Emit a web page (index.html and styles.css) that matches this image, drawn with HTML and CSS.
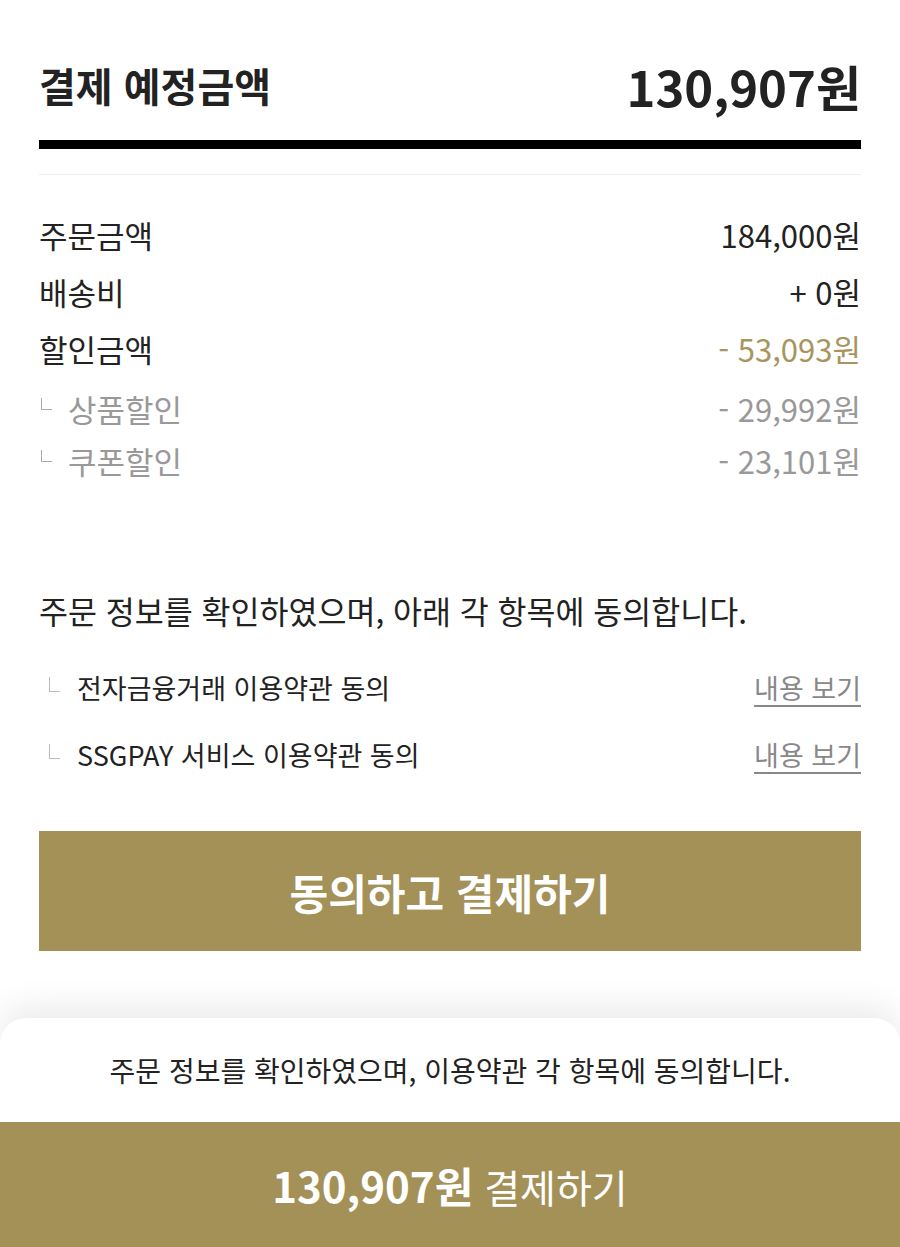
FILE: index.html
```html
<!DOCTYPE html>
<html lang="ko">
<head>
    <meta charset="UTF-8">
    <title>결제 예정금액</title>
    <meta name="viewport" content="width=device-width, initial-scale=1.0"/>
    <link rel="stylesheet" href="styles.css">
</head>

<body>
    <div class="page">
        <div class="total-head">
            <h2>결제 예정금액</h2>
            <div class="total-amount">130,907원</div>
        </div>
        <div class="thick-line"></div>
        <div class="thin-line"></div>

        <div class="price-list">
            <div class="price-row">
                <span>주문금액</span>
                <span>184,000원</span>
            </div>
            <div class="price-row">
                <span>배송비</span>
                <span>+ 0원</span>
            </div>
            <div class="price-row">
                <span>할인금액</span>
                <span class="gold">- 53,093원</span>
            </div>
            <div class="price-row sub first-sub">
                <span><i class="corner"></i>상품할인</span>
                <span>- 29,992원</span>
            </div>
            <div class="price-row sub">
                <span><i class="corner"></i>쿠폰할인</span>
                <span>- 23,101원</span>
            </div>
        </div>

        <p class="agree-title">주문 정보를 확인하였으며, 아래 각 항목에 동의합니다.</p>

        <div class="agree-list">
            <div class="agree-item">
                <span><i class="corner"></i>전자금융거래 이용약관 동의</span>
                <a href="#">내용 보기</a>
            </div>
            <div class="agree-item">
                <span><i class="corner"></i>SSGPAY 서비스 이용약관 동의</span>
                <a href="#">내용 보기</a>
            </div>
        </div>

        <button class="agree-btn">동의하고 결제하기</button>
    </div>

    <div class="bottom-sheet">
        <p class="sheet-note">주문 정보를 확인하였으며, 이용약관 각 항목에 동의합니다.</p>
        <button class="pay-bar"><b>130,907원</b> 결제하기</button>
    </div>
</body>
</html>
```

FILE: styles.css
```css
body {
    margin: 0;
    background: #fff;
    font-family: "Noto Sans CJK KR", "Noto Sans", sans-serif;
    color: #222;
}

.page {
    padding: 60px 39px 0;
}

.total-head {
    display: flex;
    justify-content: space-between;
    align-items: center;
    height: 50px;
}

.total-head h2 {
    margin: 0;
    font-size: 40px;
    font-weight: 700;
}

.total-amount {
    font-size: 49px;
    font-weight: 700;
}

.thick-line {
    height: 9px;
    background: #000;
    margin-top: 30px;
}

.thin-line {
    height: 1px;
    background: #eee;
    margin-top: 25px;
}

.price-list {
    margin-top: 31px;
}

.price-row {
    display: flex;
    justify-content: space-between;
    align-items: center;
    height: 57px;
    font-size: 31px;
}

.price-row.sub {
    height: 52px;
    color: #999;
}

.price-row.first-sub {
    margin-top: 5px;
}

.gold {
    color: #a8955e;
}

.corner {
    display: inline-block;
    width: 10px;
    height: 11px;
    border-left: 1.5px solid #aaa;
    border-bottom: 1.5px solid #aaa;
    vertical-align: 12px;
    margin: 0 16px 0 2px;
}

.agree-title {
    margin: 104px 0 0;
    line-height: 40px;
    font-size: 31.5px;
}

.agree-list {
    margin-top: 24px;
}

.agree-item {
    display: flex;
    justify-content: space-between;
    align-items: center;
    height: 67px;
    font-size: 27px;
}

.agree-item .corner {
    width: 10px;
    height: 14px;
    border-color: #bbb;
    border-width: 1px;
    margin: 0 17px 0 10px;
    vertical-align: 7px;
}

.agree-item a {
    color: #888;
    text-decoration: underline;
    text-decoration-thickness: 2px;
    text-underline-offset: 6px;
}

.agree-btn {
    display: block;
    width: 100%;
    height: 120px;
    margin-top: 43px;
    border: none;
    background: #a39158;
    color: #fff;
    font-family: inherit;
    font-size: 42px;
    font-weight: 700;
}

.bottom-sheet {
    margin-top: 67px;
    background: #fff;
    border-radius: 26px 26px 0 0;
    box-shadow: 0 -14px 30px rgba(0, 0, 0, 0.07);
}

.sheet-note {
    margin: 0;
    height: 104px;
    display: flex;
    align-items: center;
    justify-content: center;
    font-size: 28px;
}

.pay-bar {
    display: block;
    width: 100%;
    height: 125px;
    border: none;
    background: #a39158;
    color: #fff;
    font-family: inherit;
    font-size: 39px;
    font-weight: 400;
}

.pay-bar b {
    font-size: 42px;
    font-weight: 700;
}
```
